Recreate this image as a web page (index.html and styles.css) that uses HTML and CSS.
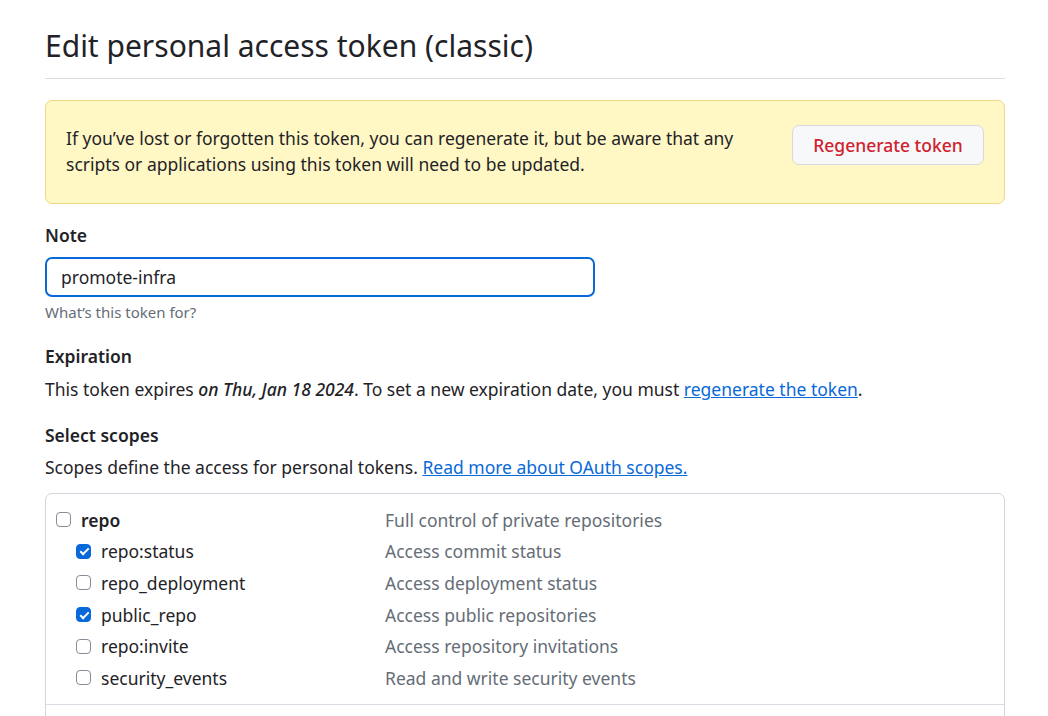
FILE: index.html
```html
<!DOCTYPE html>
<html>
<head>
<meta charset="utf-8">
<link rel="stylesheet" href="styles.css">
</head>
<body>
<main class="page">
  <h1 class="title">Edit personal access token (classic)</h1>
  <div class="flash">
    <p class="flash-text">If you’ve lost or forgotten this token, you can regenerate it, but be aware that any scripts or applications using this token will need to be updated.</p>
    <button class="btn-danger">Regenerate token</button>
  </div>

  <div class="field note">
    <label class="label">Note</label>
    <input class="input" type="text" value="promote-infra">
    <p class="hint">What’s this token for?</p>
  </div>

  <div class="field expiration">
    <h3 class="label">Expiration</h3>
    <p class="text">This token expires <em>on Thu, Jan 18 2024</em>. To set a new expiration date, you must <a href="#">regenerate the token</a>.</p>
  </div>

  <div class="field select">
    <h3 class="label">Select scopes</h3>
    <p class="text tight">Scopes define the access for personal tokens. <a href="#">Read more about OAuth scopes.</a></p>
  </div>

  <div class="scopes">
    <div class="group">
      <div class="row parent">
        <span class="name"><span class="cb"></span><strong>repo</strong></span>
        <span class="desc">Full control of private repositories</span>
      </div>
      <div class="row child">
        <span class="name"><span class="cb on"></span>repo:status</span>
        <span class="desc">Access commit status</span>
      </div>
      <div class="row child">
        <span class="name"><span class="cb"></span>repo_deployment</span>
        <span class="desc">Access deployment status</span>
      </div>
      <div class="row child">
        <span class="name"><span class="cb on"></span>public_repo</span>
        <span class="desc">Access public repositories</span>
      </div>
      <div class="row child">
        <span class="name"><span class="cb"></span>repo:invite</span>
        <span class="desc">Access repository invitations</span>
      </div>
      <div class="row child">
        <span class="name"><span class="cb"></span>security_events</span>
        <span class="desc">Read and write security events</span>
      </div>
    </div>
    <div class="group"></div>
  </div>
</main>
</body>
</html>
```

FILE: styles.css
```css
* { box-sizing: border-box; }
html, body { margin: 0; padding: 0; background: #ffffff; }
body {
  font-family: "Noto Sans", "DejaVu Sans", sans-serif;
  font-size: 17.5px;
  color: #1f2328;
  overflow: hidden;
}
.page {
  width: 960px;
  margin-left: 45px;
  padding-top: 26px;
}
.title {
  margin: 0;
  font-size: 30px;
  font-weight: 400;
  line-height: 40px;
  padding-bottom: 12px;
  border-bottom: 1px solid #d8dee4;
}
.flash {
  margin-top: 21px;
  background: #fff8c5;
  border: 1px solid #eed888;
  border-radius: 7px;
  padding: 24px 20px 26px 20px;
  display: flex;
  align-items: flex-start;
  gap: 40px;
}
.flash-text {
  margin: 0;
  flex: 1;
  line-height: 26px;
}
.btn-danger {
  flex: none;
  margin-top: 0;
  height: 40px;
  width: 192px;
  font-family: inherit;
  font-size: 17.5px;
  color: #cf222e;
  background: #f6f8fa;
  border: 1px solid #d6d9dd;
  border-radius: 7px;
  font-weight: 500;
  padding: 0;
}
.field.note { margin-top: 18px; }
.field.expiration { margin-top: 21px; }
.field.select { margin-top: 20px; }
.label {
  display: block;
  margin: 0;
  font-size: 17.5px;
  font-weight: 600;
  line-height: 26px;
}
.input {
  display: block;
  margin-top: 9px;
  width: 550px;
  height: 40px;
  border: 2px solid #0969da;
  border-radius: 7px;
  padding: 0 14px;
  font-family: inherit;
  font-size: 17.5px;
  color: #1f2328;
  outline: none;
}
.hint {
  margin: 5px 0 0;
  font-size: 15px;
  color: #656d76;
  line-height: 20px;
}
.text {
  margin: 7px 0 0;
  line-height: 26px;
}
.text.tight { margin-top: 6px; }
.text em { font-style: italic; font-weight: 500; }
a { color: #0969da; text-decoration: underline; }
.scopes {
  margin-top: 13px;
  border: 1px solid #d0d7de;
  border-radius: 7px;
}
.group {
  padding: 10px 10px 10px;
  border-bottom: 1px solid #d8dee4;
}
.group:last-child { border-bottom: none; height: 20px; }
.row {
  display: flex;
  align-items: center;
  height: 31.6px;
}
.name {
  display: flex;
  align-items: center;
  width: 329px;
}
.child .name { padding-left: 20px; }
.parent strong { font-weight: 600; }
.desc { color: #656d76; }
.cb {
  width: 15px;
  height: 15px;
  border: 1px solid #858e98;
  border-radius: 4px;
  margin-right: 10px;
  flex: none;
  background: #fff;
  position: relative;
}
.cb.on {
  background: #0969da;
  border-color: #0969da;
}
.cb.on::after {
  content: "";
  position: absolute;
  left: 4.5px;
  top: 1.5px;
  width: 3px;
  height: 7px;
  border: solid #fff;
  border-width: 0 2px 2px 0;
  transform: rotate(45deg);
}
```
